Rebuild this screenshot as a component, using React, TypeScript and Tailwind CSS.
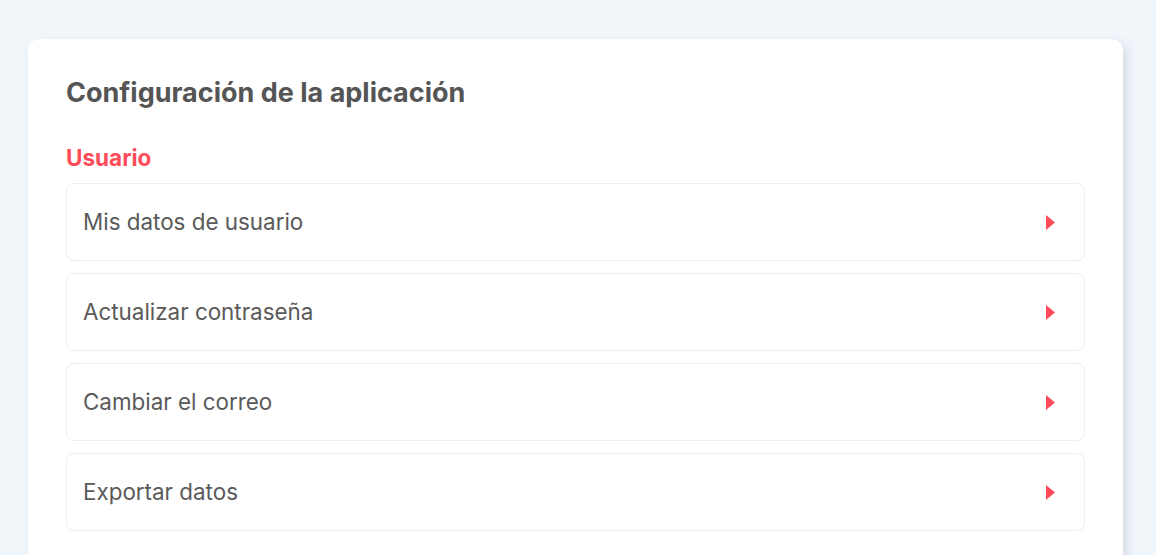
import React from "react";

const items = ["Mis datos de usuario", "Actualizar contraseña", "Cambiar el correo", "Exportar datos"];

export default function App() {
  return (
    <div className="h-[555px] bg-[#f1f6fb] pt-[39px] pl-[28px] overflow-hidden" style={{ fontFamily: "Inter, 'Noto Sans', sans-serif" }}>
      <div className="w-[1095px] h-[560px] bg-white rounded-[12px] shadow-[4px_4px_10px_rgba(140,155,175,0.3)] px-[38px] pt-[36px]">
        <h1 className="text-[27px] leading-[36px] font-bold text-[#555555]">Configuración de la aplicación</h1>
        <h2 className="mt-[32px] text-[22.5px] leading-[30px] font-bold text-[#ff4b5a]">Usuario</h2>
        <div className="mt-[10px] flex flex-col gap-[12px]">
          {items.map((t) => (
            <div key={t} className="h-[78px] border border-[#e9eef7] rounded-[8px] pl-[16px] pr-[29px] flex items-center justify-between">
              <span className="text-[22.4px] font-normal text-[#5a5a5a]">{t}</span>
              <svg width="9" height="15" viewBox="0 0 9 15"><polygon points="0,0 9,7.5 0,15" fill="#ff4b5a" /></svg>
            </div>
          ))}
        </div>
      </div>
    </div>
  );
}
